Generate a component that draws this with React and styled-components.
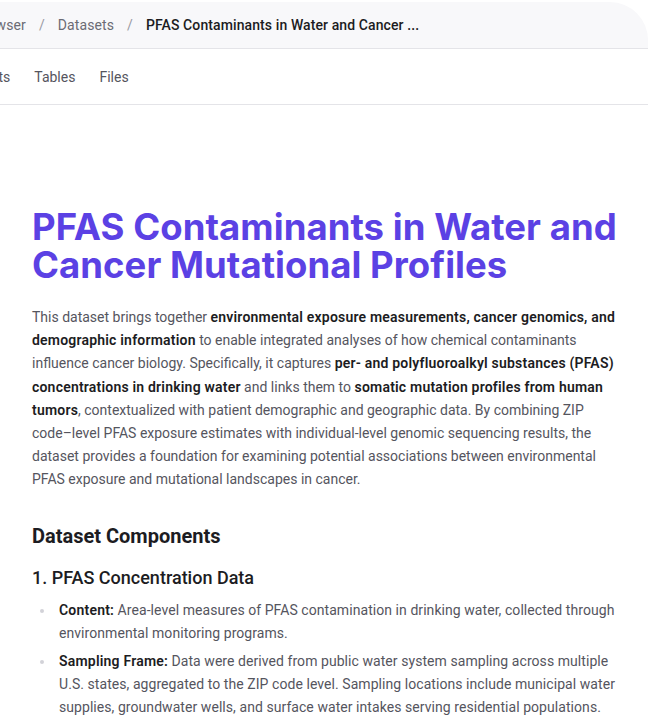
import React from "react";
import styled, { createGlobalStyle } from "styled-components";

const Global = createGlobalStyle`
  html, body { margin: 0; padding: 0; background: #ffffff; }
  body {
    font-family: Roboto, "Noto Sans", "Liberation Sans", sans-serif;
    -webkit-font-smoothing: antialiased;
    overflow: hidden;
  }
`;

const Panel = styled.div`
  margin-top: 2px;
  border-top-right-radius: 38px;
  background: #ffffff;
  overflow: hidden;
  min-height: 725px;
`;

const CrumbBar = styled.nav`
  height: 46px;
  display: flex;
  align-items: center;
  background: #f8f8fa;
  border-bottom: 1px solid #e4e4e8;
  overflow: hidden;
`;

const Trail = styled.ol`
  list-style: none;
  margin: 0 0 0 ${(p) => p.$shift}px;
  padding: 0;
  display: flex;
  align-items: center;
  gap: 13px;
  font-size: 14px;
  letter-spacing: 0.1px;
  white-space: nowrap;
`;

const Crumb = styled.li`
  color: ${(p) => (p.$current ? "#1c1c22" : "#6b6b74")};
  font-weight: ${(p) => (p.$current ? 500 : 400)};
`;

const Sep = styled.li`
  color: #9a9aa3;
`;

const TabBar = styled.div`
  height: 55px;
  display: flex;
  align-items: center;
  border-bottom: 1px solid #e4e4e8;
  overflow: hidden;
`;

const TabList = styled.div`
  display: flex;
  gap: 24px;
  margin-left: ${(p) => p.$shift}px;
  white-space: nowrap;
`;

const Tab = styled.span`
  font-size: 14px;
  color: #55555e;
`;

const Content = styled.main`
  padding: 103px 22px 0 32px;
`;

const Title = styled.h1`
  margin: 0;
  font-family: Inter, Roboto, sans-serif;
  font-size: 36.5px;
  line-height: 38px;
  font-weight: 700;
  letter-spacing: 0.05px;
  color: #5b41e4;
`;

const Lead = styled.p`
  margin: 22px 0 0;
  font-size: 14px;
  line-height: 23.2px;
  letter-spacing: 0;
  color: #55555e;
`;

const Strong = styled.strong`
  font-weight: 600;
  letter-spacing: 0.2px;
  color: #1c1c22;
`;

const H2 = styled.h2`
  margin: 30px 0 0;
  font-size: 20px;
  line-height: 28px;
  font-weight: 700;
  color: #1c1c22;
`;

const H3 = styled.h3`
  margin: 15px 0 0;
  font-size: 18px;
  line-height: 26px;
  font-weight: 500;
  color: #1c1c22;
`;

const List = styled.ul`
  margin: 8px 0 0;
  padding: 0 0 0 27px;
  list-style: none;
  display: flex;
  flex-direction: column;
  gap: 5px;
`;

const Item = styled.li`
  position: relative;
  font-size: 14px;
  line-height: 23.2px;
  letter-spacing: 0.06px;
  color: #55555e;
  &::before {
    content: "";
    position: absolute;
    left: -19px;
    top: 10px;
    width: 4px;
    height: 4px;
    border-radius: 50%;
    background: #d2d2d8;
  }
`;

export default function App() {
  return (
    <>
      <Global />
      <Panel>
        <CrumbBar>
          <Trail $shift={-59}>
            <Crumb>Data Browser</Crumb>
            <Sep>/</Sep>
            <Crumb>Datasets</Crumb>
            <Sep>/</Sep>
            <Crumb $current>PFAS Contaminants in Water and Cancer ...</Crumb>
          </Trail>
        </CrumbBar>
        <TabBar>
          <TabList $shift={-120}>
            <Tab>Overview</Tab>
            <Tab>Insights</Tab>
            <Tab>Tables</Tab>
            <Tab>Files</Tab>
          </TabList>
        </TabBar>
        <Content>
          <Title>PFAS Contaminants in Water and Cancer Mutational Profiles</Title>
          <Lead>
            This dataset brings together{" "}
            <Strong>environmental exposure measurements, cancer genomics, and demographic information</Strong>{" "}
            to enable integrated analyses of how chemical contaminants influence cancer biology. Specifically, it captures{" "}
            <Strong>per- and polyfluoroalkyl substances (PFAS) concentrations in drinking water</Strong>{" "}
            and links them to <Strong>somatic mutation profiles from human tumors</Strong>, contextualized with patient
            demographic and geographic data. By combining ZIP code–level PFAS exposure estimates with individual-level
            genomic sequencing results, the dataset provides a foundation for examining potential associations between
            environmental PFAS exposure and mutational landscapes in cancer.
          </Lead>
          <H2>Dataset Components</H2>
          <H3>1. PFAS Concentration Data</H3>
          <List>
            <Item>
              <Strong>Content:</Strong> Area-level measures of PFAS contamination in drinking water, collected through
              environmental monitoring programs.
            </Item>
            <Item>
              <Strong>Sampling Frame:</Strong> Data were derived from public water system sampling across multiple U.S.
              states, aggregated to the ZIP code level. Sampling locations include municipal water supplies, groundwater
              wells, and surface water intakes serving residential populations.
            </Item>
          </List>
        </Content>
      </Panel>
    </>
  );
}
